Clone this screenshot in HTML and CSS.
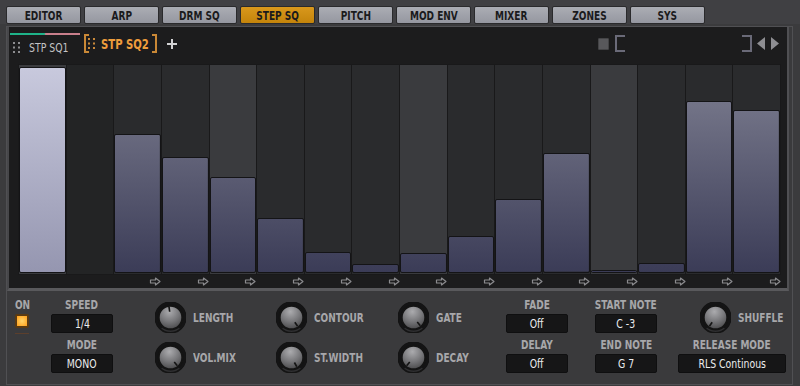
FILE: index.html
```html
<!DOCTYPE html>
<html lang="en">
<head>
  <meta charset="UTF-8" />
  <meta name="viewport" content="width=device-width, initial-scale=1.0"/>
  <title>Step Sequencer</title>
  <link rel="stylesheet" href="styles.css">
</head>
<body>

  <svg class="defs" width="0" height="0">
    <defs>
      <radialGradient id="knob-face" cx="45%" cy="25%" r="85%">
        <stop offset="0" stop-color="#ababae"/>
        <stop offset="0.5" stop-color="#77777a"/>
        <stop offset="1" stop-color="#3e3e40"/>
      </radialGradient>
      <g id="knob-base">
        <circle cx="16" cy="16" r="15.8" fill="#2f2f31"/>
        <path d="M6.68 27.11 A14.5 14.5 0 1 1 25.32 27.11" fill="none" stroke="#141415" stroke-width="3.2"/>
        <circle cx="16" cy="16" r="12.6" fill="#1a1a1b"/>
        <circle cx="16" cy="16" r="12" fill="url(#knob-face)"/>
      </g>
      <g id="grip-dots">
        <rect x="0" y="0" width="2" height="2"/>
        <rect x="5" y="0" width="2" height="2"/>
        <rect x="0" y="4.5" width="2" height="2"/>
        <rect x="5" y="4.5" width="2" height="2"/>
        <rect x="0" y="9" width="2" height="2"/>
        <rect x="5" y="9" width="2" height="2"/>
      </g>
      <path id="step-arrow" d="M1.5 3 H6.5 V1 L11 4.5 L6.5 8 V6 H1.5 Z" fill="none" stroke="#8b8b8e" stroke-width="1.2" stroke-linejoin="round"/>
    </defs>
  </svg>

  <nav class="tabs">
    <div class="tab"><span class="narrow">EDITOR</span></div>
    <div class="tab"><span class="narrow">ARP</span></div>
    <div class="tab"><span class="narrow">DRM SQ</span></div>
    <div class="tab active"><span class="narrow">STEP SQ</span></div>
    <div class="tab"><span class="narrow">PITCH</span></div>
    <div class="tab"><span class="narrow">MOD ENV</span></div>
    <div class="tab"><span class="narrow">MIXER</span></div>
    <div class="tab"><span class="narrow">ZONES</span></div>
    <div class="tab"><span class="narrow">SYS</span></div>
  </nav>

  <div class="panel">
    <section class="seq">
      <div class="seq-head">
        <div class="page-one">
          <div class="page-line"></div>
          <div class="page-label">
            <svg class="grip" viewBox="0 0 7 11"><use href="#grip-dots"/></svg>
            <span class="narrow left">STP SQ1</span>
          </div>
        </div>
        <div class="page-two">
          <span class="brk brk-left"></span>
          <svg class="grip grip-orange" viewBox="0 0 7 11"><use href="#grip-dots"/></svg>
          <span class="page-two-name"><span class="narrow left">STP SQ2</span></span>
          <span class="brk brk-right"></span>
        </div>
        <svg class="add" viewBox="0 0 10 10"><path d="M5 0 V10 M0 5 H10" stroke="#d2d2d4" stroke-width="2"/></svg>
        <div class="spacer"></div>
        <span class="stop"></span>
        <div class="loop"><span class="loop-l"></span><span class="loop-r"></span></div>
        <svg class="nav-arrows" viewBox="0 0 22 13"><path d="M8 0 L0 6.5 L8 13 Z M14 0 L22 6.5 L14 13 Z" fill="#8e8e92"/></svg>
      </div>

      <div class="steps">
        <div class="step beat"><div class="bar current" style="height:99%"></div></div>
        <div class="step off"></div>
        <div class="step"><div class="bar" style="height:67%"></div></div>
        <div class="step"><div class="bar" style="height:56%"></div></div>
        <div class="step beat"><div class="bar" style="height:46%"></div></div>
        <div class="step"><div class="bar" style="height:26.5%"></div></div>
        <div class="step"><div class="bar" style="height:10%"></div></div>
        <div class="step"><div class="bar" style="height:4.5%"></div></div>
        <div class="step beat"><div class="bar" style="height:9.6%"></div></div>
        <div class="step"><div class="bar" style="height:18%"></div></div>
        <div class="step"><div class="bar" style="height:35.5%"></div></div>
        <div class="step"><div class="bar" style="height:57.5%"></div></div>
        <div class="step beat"><div class="bar" style="height:1.5%"></div></div>
        <div class="step"><div class="bar" style="height:4.8%"></div></div>
        <div class="step"><div class="bar" style="height:82.5%"></div></div>
        <div class="step"><div class="bar" style="height:78.5%"></div></div>
      </div>

      <div class="arrows">
        <span></span>
        <span></span>
        <span><svg viewBox="0 0 12 9"><use href="#step-arrow"/></svg></span>
        <span><svg viewBox="0 0 12 9"><use href="#step-arrow"/></svg></span>
        <span><svg viewBox="0 0 12 9"><use href="#step-arrow"/></svg></span>
        <span><svg viewBox="0 0 12 9"><use href="#step-arrow"/></svg></span>
        <span><svg viewBox="0 0 12 9"><use href="#step-arrow"/></svg></span>
        <span><svg viewBox="0 0 12 9"><use href="#step-arrow"/></svg></span>
        <span><svg viewBox="0 0 12 9"><use href="#step-arrow"/></svg></span>
        <span><svg viewBox="0 0 12 9"><use href="#step-arrow"/></svg></span>
        <span><svg viewBox="0 0 12 9"><use href="#step-arrow"/></svg></span>
        <span><svg viewBox="0 0 12 9"><use href="#step-arrow"/></svg></span>
        <span><svg viewBox="0 0 12 9"><use href="#step-arrow"/></svg></span>
        <span><svg viewBox="0 0 12 9"><use href="#step-arrow"/></svg></span>
        <span><svg viewBox="0 0 12 9"><use href="#step-arrow"/></svg></span>
        <span><svg viewBox="0 0 12 9"><use href="#step-arrow"/></svg></span>
      </div>
    </section>

    <section class="controls">
      <!-- row 1 -->
      <div class="power">
        <span class="field-label"><span class="narrow">ON</span></span>
        <span class="led"></span>
        <span class="led-line"></span>
      </div>
      <div class="field">
        <span class="field-label"><span class="narrow">SPEED</span></span>
        <span class="field-value"><span class="narrow">1/4</span></span>
      </div>
      <div class="knob-cell">
        <svg class="knob" viewBox="0 0 32 32"><use href="#knob-base"/><line x1="16" y1="10" x2="16" y2="5" transform="rotate(-8 16 16)"/></svg>
        <span class="knob-label"><span class="narrow left">LENGTH</span></span>
      </div>
      <div class="knob-cell">
        <svg class="knob" viewBox="0 0 32 32"><use href="#knob-base"/><line x1="16" y1="10" x2="16" y2="5" transform="rotate(145 16 16)"/></svg>
        <span class="knob-label"><span class="narrow left">CONTOUR</span></span>
      </div>
      <div class="knob-cell">
        <svg class="knob" viewBox="0 0 32 32"><use href="#knob-base"/><line x1="16" y1="10" x2="16" y2="5" transform="rotate(140 16 16)"/></svg>
        <span class="knob-label"><span class="narrow left">GATE</span></span>
      </div>
      <div class="field">
        <span class="field-label"><span class="narrow">FADE</span></span>
        <span class="field-value"><span class="narrow">Off</span></span>
      </div>
      <div class="field">
        <span class="field-label"><span class="narrow">START NOTE</span></span>
        <span class="field-value"><span class="narrow">C -3</span></span>
      </div>
      <div class="knob-cell shuffle">
        <svg class="knob" viewBox="0 0 32 32"><use href="#knob-base"/><line x1="16" y1="10" x2="16" y2="5" transform="rotate(-145 16 16)"/></svg>
        <span class="knob-label"><span class="narrow left">SHUFFLE</span></span>
      </div>

      <!-- row 2 -->
      <div></div>
      <div class="field">
        <span class="field-label"><span class="narrow">MODE</span></span>
        <span class="field-value"><span class="narrow">MONO</span></span>
      </div>
      <div class="knob-cell">
        <svg class="knob" viewBox="0 0 32 32"><use href="#knob-base"/><line x1="16" y1="10" x2="16" y2="5" transform="rotate(140 16 16)"/></svg>
        <span class="knob-label"><span class="narrow left">VOL.MIX</span></span>
      </div>
      <div class="knob-cell">
        <svg class="knob" viewBox="0 0 32 32"><use href="#knob-base"/><line x1="16" y1="10" x2="16" y2="5" transform="rotate(150 16 16)"/></svg>
        <span class="knob-label"><span class="narrow left">ST.WIDTH</span></span>
      </div>
      <div class="knob-cell">
        <svg class="knob" viewBox="0 0 32 32"><use href="#knob-base"/><line x1="16" y1="10" x2="16" y2="5" transform="rotate(-140 16 16)"/></svg>
        <span class="knob-label"><span class="narrow left">DECAY</span></span>
      </div>
      <div class="field">
        <span class="field-label"><span class="narrow">DELAY</span></span>
        <span class="field-value"><span class="narrow">Off</span></span>
      </div>
      <div class="field">
        <span class="field-label"><span class="narrow">END NOTE</span></span>
        <span class="field-value"><span class="narrow">G 7</span></span>
      </div>
      <div class="field wide">
        <span class="field-label"><span class="narrow">RELEASE MODE</span></span>
        <span class="field-value"><span class="narrow">RLS Continous</span></span>
      </div>
    </section>
  </div>

</body>
</html>
```

FILE: styles.css
```css
body {
  margin: 0;
  width: 800px;
  height: 386px;
  overflow: hidden;
  background-color: #3b3b3d;
  font-family: "DejaVu Sans Condensed", "Liberation Sans", sans-serif;
}
.defs {
  display: block;
  width: 0;
  height: 0;
}

/* the ui font is much narrower than anything installed */
.narrow {
  display: inline-block;
  white-space: nowrap;
  transform: scaleX(0.8);
}
.narrow.left {
  transform-origin: left center;
}

/* top tabs */
.tabs {
  display: flex;
  gap: 3px;
  height: 24px;
  padding: 6px 0 0 6px;
  box-sizing: border-box;
  background: #404043;
}
.tab {
  width: 75px;
  height: 18px;
  box-sizing: border-box;
  display: flex;
  align-items: center;
  justify-content: center;
  background: linear-gradient(#abadb4, #9597a0);
  border: 1px solid #2a2a2c;
  border-radius: 2px;
  color: #1a1a1c;
  font-size: 12.5px;
  font-weight: bold;
}
.tab.active {
  background: linear-gradient(#d9981c, #c4840b);
}

.panel {
  margin: 2px 7px 0 6px;
  height: 357px;
  border: 1px solid #505053;
  background: #3a3a3c;
  display: flex;
  flex-direction: column;
}

/* sequencer area */
.seq {
  height: 264px;
  box-sizing: border-box;
  margin-right: 3px;
  background: #1c1c1d;
  border-left: 2px solid #47474a;
  border-right: 2px solid #505053;
  border-bottom: 3px solid #59595c;
  display: flex;
  flex-direction: column;
}
.seq-head {
  height: 30px;
  box-sizing: border-box;
  padding: 3px 8px 0 1px;
  display: flex;
  align-items: center;
}
.page-one {
  width: 70px;
  align-self: stretch;
  padding-top: 3px;
}
.page-line {
  height: 2px;
  background: linear-gradient(to right, #1fb389 0, #1fb389 49%, #c97f8c 51%);
}
.page-label {
  margin-top: 5px;
  display: flex;
  align-items: center;
  gap: 9px;
  padding-left: 3px;
  color: #c4c4c6;
  font-size: 13px;
}
.grip {
  width: 7px;
  height: 11px;
  flex-shrink: 0;
  fill: #8d8d90;
}
.grip-orange {
  fill: #c9893a;
  margin-left: -1px;
}
.page-two {
  margin-left: 4px;
  display: flex;
  align-items: center;
  color: #ee9d3c;
  font-size: 14px;
  font-weight: bold;
}
.brk {
  width: 3px;
  height: 15px;
  border: 2px solid #c98836;
}
.brk-left {
  border-right: none;
}
.brk-right {
  border-left: none;
  margin-left: 3px;
}
.page-two-name {
  width: 48px;
  margin-left: 6px;
}
.add {
  width: 10px;
  height: 10px;
  margin-left: 10px;
}
.spacer {
  flex: 1;
}
.stop {
  width: 11px;
  height: 12px;
  border-radius: 1px;
  background: #58585b;
  border: 1px solid #444446;
  box-sizing: border-box;
}
.loop {
  width: 137px;
  height: 17px;
  margin-left: 6px;
  display: flex;
  justify-content: space-between;
}
.loop-l, .loop-r {
  width: 8px;
  border: 2px solid #6a6a78;
}
.loop-l {
  border-right: none;
}
.loop-r {
  border-left: none;
}
.nav-arrows {
  width: 22px;
  height: 13px;
  margin-left: 5px;
}

.steps {
  margin: 7px 6px 0 9px;
  height: 211px;
  box-sizing: border-box;
  padding: 1px;
  background: #19191a;
  display: grid;
  grid-template-columns: repeat(16, 1fr);
  gap: 1px;
}
.step {
  background: #2a2b2d;
  display: flex;
  flex-direction: column;
  justify-content: flex-end;
  padding-bottom: 1px;
}
.step.beat {
  background: #3a3b3e;
}
.step.off {
  background: #232425;
}
.bar {
  box-sizing: border-box;
  border: 1px solid #141416;
  border-radius: 2px;
  background: linear-gradient(#7f8092, #3b3c57) bottom / 100% 207px no-repeat;
}
.bar.current {
  background: linear-gradient(#c8c9dd, #9596b0);
}
.arrows {
  margin: 0 6px 0 10px;
  height: 12px;
  display: grid;
  grid-template-columns: repeat(16, 1fr);
  gap: 1px;
}
.arrows span {
  display: flex;
  align-items: center;
  justify-content: flex-end;
}
.arrows svg {
  width: 12px;
  height: 9px;
}

/* controls */
.controls {
  flex: 1;
  display: grid;
  grid-template-columns: 38px 104px 121px 122px 108px 89px 83px 108px;
  grid-template-rows: 36px 36px;
  row-gap: 4px;
  padding: 7px 0 0 6px;
}
.field-label {
  height: 14px;
  line-height: 14px;
  display: flex;
  justify-content: center;
  color: #a7a7aa;
  font-size: 12.5px;
  font-weight: bold;
  white-space: nowrap;
}
.power {
  width: 18px;
  display: flex;
  flex-direction: column;
  align-items: center;
}
.led {
  margin-top: 2px;
  width: 14px;
  height: 14px;
  box-sizing: border-box;
  border: 2px solid #5a3a12;
  border-radius: 2px;
  background: radial-gradient(#ffd46a, #ff9f1a);
}
.led-line {
  margin-top: 5px;
  width: 14px;
  height: 1px;
  background: #5c3f2c;
}
.field {
  width: 62px;
  display: flex;
  flex-direction: column;
  align-items: center;
  gap: 2px;
}
.field.wide {
  width: 108px;
}
.field-value {
  width: 100%;
  height: 19px;
  box-sizing: border-box;
  display: flex;
  align-items: center;
  justify-content: center;
  background: #161617;
  border: 1px solid #0f0f10;
  border-radius: 2px;
  color: #ececee;
  font-size: 13px;
}
.knob-cell {
  display: flex;
  align-items: center;
  gap: 7px;
  padding-top: 2px;
}
.knob-cell.shuffle {
  padding-left: 22px;
}
.knob {
  width: 31px;
  height: 31px;
  flex-shrink: 0;
  stroke: #141414;
  stroke-width: 1.7;
}
.knob-label {
  color: #a7a7aa;
  font-size: 12.5px;
  font-weight: bold;
}
```
